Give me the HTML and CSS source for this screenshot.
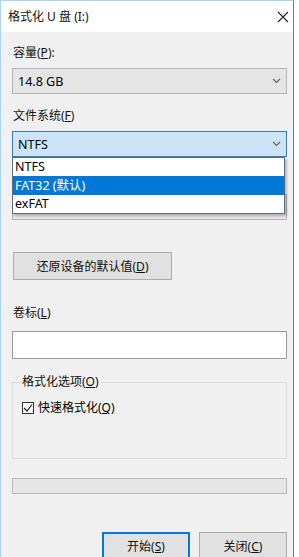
FILE: index.html
```html
<!DOCTYPE html>
<html lang="zh-CN">
<head>
<meta charset="utf-8">
<title>格式化 U 盘 (I:)</title>
<link rel="stylesheet" href="styles.css">
</head>
<body>
<div class="window">
  <div class="titlebar">
    <span class="title">格式化 U 盘 (I:)</span>
    <svg class="close" width="12" height="12" viewBox="0 0 12 12"><path d="M1 1L11 11M11 1L1 11" stroke="#222" stroke-width="1.1" fill="none"/></svg>
  </div>
  <div class="content">
    <div class="label lbl-cap">容量(<u>P</u>):</div>
    <div class="combo">
      <span>14.8 GB</span>
      <svg class="chev" width="9" height="6" viewBox="0 0 9 6"><path d="M1 1L4.5 4.5L8 1" stroke="#606060" stroke-width="1.1" fill="none"/></svg>
    </div>

    <div class="label lbl-fs">文件系统(<u>F</u>)</div>
    <div class="fs-wrap">
      <div class="combo focused">
        <span>NTFS</span>
        <svg class="chev" width="9" height="6" viewBox="0 0 9 6"><path d="M1 1L4.5 4.5L8 1" stroke="#606060" stroke-width="1.1" fill="none"/></svg>
      </div>
      <ul class="dropdown">
        <li>NTFS</li>
        <li class="sel">FAT32 (默认)</li>
        <li>exFAT</li>
      </ul>
    </div>

    <div class="label-spacer"></div>
    <div class="combo"></div>

    <button class="btn btn-restore">还原设备的默认值(<u>D</u>)</button>

    <div class="label lbl-vol">卷标(<u>L</u>)</div>
    <div class="textbox"></div>

    <fieldset class="group">
      <legend>格式化选项(<u>O</u>)</legend>
      <div class="check-row">
        <span class="checkbox"><svg width="10" height="10" viewBox="0 0 10 10"><path d="M1 5L4 8L9 1.5" stroke="#222" stroke-width="1.2" fill="none"/></svg></span>
        <span>快速格式化(<u>Q</u>)</span>
      </div>
    </fieldset>

    <div class="progress"></div>

    <div class="actions">
      <button class="btn btn-default">开始(<u>S</u>)</button>
      <button class="btn">关闭(<u>C</u>)</button>
    </div>
  </div>
</div>
</body>
</html>
```

FILE: styles.css
```css
* { box-sizing: border-box; }
html, body {
  margin: 0;
  padding: 0;
  background: #ffffff;
  height: 557px;
  overflow: hidden;
}
body {
  font-family: "Noto Sans", "Noto Sans CJK SC", sans-serif;
  font-size: 12px;
  color: #000;
}
u { text-decoration: underline; text-underline-offset: 1px; }

.window {
  width: 294px;
  height: 557px;
  background: #f0f0f0;
  border-left: 1px solid #a9d3f2;
  border-right: 1px solid #3a8ad4;
  border-top: 1px solid #a9d3f2;
}
.titlebar {
  height: 31px;
  background: #ffffff;
  display: flex;
  align-items: center;
  justify-content: space-between;
  padding: 0 4px 0 7px;
}
.title { font-size: 12px; color: #111; line-height: 16px; }

.content {
  padding: 0 6px 0 11px;
}
.label {
  line-height: 16px;
  height: 16px;
  padding-left: 1px;
  color: #111;
}
.label-spacer { height: 16px; margin-top: 14px; }
.lbl-cap { margin-top: 13px; }
.lbl-fs { margin-top: 14px; }
.lbl-vol { margin-top: 25px; }

.combo {
  margin-top: 7px;
  height: 26px;
  background: #e5e5e5;
  border: 1px solid #b5b5b5;
  display: flex;
  align-items: center;
  justify-content: space-between;
  padding: 0 5px 0 5px;
  font-size: 12.5px;
}
.combo.focused {
  background: #cce4f7;
  border-color: #3d7ab3;
}
.chev { flex: none; }

.fs-wrap { position: relative; }
.dropdown {
  position: absolute;
  top: 100%;
  left: 0;
  width: 273px;
  margin: 0;
  padding: 0;
  list-style: none;
  background: #fff;
  border: 1px solid #5a6e82;
  box-shadow: 2px 2px 2px rgba(0,0,0,0.22);
  z-index: 2;
}
.dropdown li {
  height: 18px;
  line-height: 18px;
  padding-left: 2px;
  font-size: 12.5px;
}
.dropdown li.sel {
  background: #0078d7;
  color: #fff;
  height: 19px;
  line-height: 19px;
}

.btn {
  font-family: inherit;
  font-size: 12px;
  height: 28px;
  background: #e1e1e1;
  border: 1px solid #adadad;
  color: #111;
  padding: 0;
  display: block;
}
.btn-restore {
  margin-top: 32px;
  margin-left: 1px;
  width: 159px;
}

.textbox {
  margin-top: 10px;
  height: 28px;
  background: #fff;
  border: 1px solid #9a9a9a;
}

.group {
  margin: 15px 0 0 0;
  border: 1px solid #dcdcdc;
  padding: 0 9px;
  height: 85px;
}
.group legend {
  padding: 0 2px 0 0;
  line-height: 16px;
  color: #111;
}
.check-row {
  margin-top: 10px;
  display: flex;
  align-items: center;
  gap: 4px;
  line-height: 16px;
}
.checkbox {
  width: 12px;
  height: 12px;
  border: 1px solid #333;
  background: #fff;
  display: flex;
  align-items: center;
  justify-content: center;
}
.checkbox svg { display: block; }

.progress {
  margin-top: 19px;
  height: 16px;
  background: #e6e6e6;
  border: 1px solid #bcbcbc;
}

.actions {
  margin-top: 38px;
  display: flex;
  justify-content: flex-end;
  gap: 9px;
}
.actions .btn {
  width: 88px;
  height: 28px;
}
.btn-default {
  border: 2px solid #0078d7;
}
```
